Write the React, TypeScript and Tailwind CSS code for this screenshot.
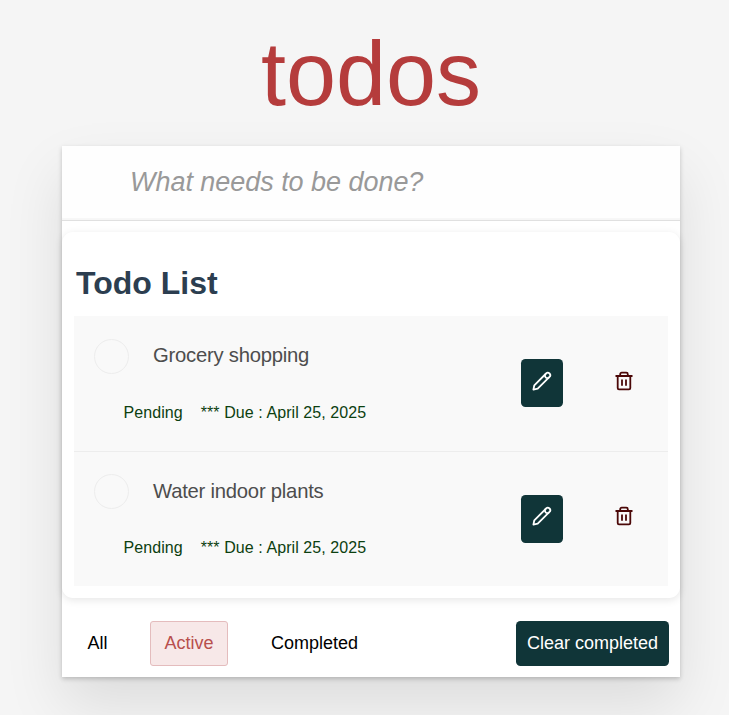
const todos = ["Grocery shopping", "Water indoor plants"];

function PencilIcon() {
  return (
    <svg width="20" height="20" viewBox="0 0 20 20" fill="none" stroke="#fff" strokeWidth="1.8" strokeLinejoin="round" strokeLinecap="round">
      <path d="M1.400 18.600 2.300 14.300 14.100 2.500a2.400 2.400 0 0 1 3.400 3.400L5.700 17.700Z" />
      <path d="M13.200 3.400a2.500 2.500 0 0 0 3.400 3.400" />
    </svg>
  );
}

function TrashIcon() {
  return (
    <svg width="18" height="20" viewBox="0 0 18 20" fill="none" stroke="#4b0808" strokeWidth="1.8">
      <path d="M.500 5h17M5.200 4.800V3.200a1.500 1.500 0 0 1 1.500-1.500h4.600a1.500 1.500 0 0 1 1.500 1.500v1.600M2.700 5v12a1.300 1.300 0 0 0 1.300 1.300h10a1.300 1.300 0 0 0 1.300-1.300V5M7 8.400v6.400M11 8.400v6.400" />
    </svg>
  );
}

function TodoItem({ title }: { title: string }) {
  return (
    <li className="flex h-[135.500px] border-b border-[#ededed] bg-[#f9f9f9] last:h-[134.500px] last:border-b-0">
      <div className="w-[447px]">
        <div className="flex pt-[23px] pl-[19.500px]">
          <span className="-mt-[0.100px] h-[35px] w-[35px] rounded-full border border-[#ededed]" />
          <span className="ml-[24.500px] text-[20.250px] leading-[32px] tracking-[-0.230px] text-[#4d4d4d]">{title}</span>
        </div>
        <p className="mt-[26.700px] ml-[49.500px] text-[16px] leading-[24px] tracking-[0.075px] whitespace-pre text-[#0c4010]">
          Pending<span className="ml-[18px]">*** Due : April 25, 2025</span>
        </p>
      </div>
      <button className="mt-[43px] flex h-[48px] w-[42px] justify-center rounded-[4.500px] bg-[#103538] pt-[11.900px]">
        <PencilIcon />
      </button>
      <button className="mt-[54.900px] ml-[52px] h-[20px] w-[18px]">
        <TrashIcon />
      </button>
    </li>
  );
}

export default function App() {
  return (
    <div className="h-[715px] overflow-hidden bg-[#f5f5f5] pl-[62px] font-['Liberation_Sans',Arial,sans-serif]">
      <h1 className="h-[146px] w-[618px] pt-[23px] text-center text-[90px] leading-[102px] text-[#b53c3c]">todos</h1>
      <main className="h-[531px] w-[618px] bg-white shadow-[0_2px_4.500px_rgba(0,0,0,0.2),0_28px_56px_rgba(0,0,0,0.1)]">
        <input
          className="block h-[74px] w-full bg-[#fefefe] pb-[2px] pl-[68px] text-[27px] tracking-[-0.040px] shadow-[inset_0_-2px_1px_rgba(0,0,0,0.03)] outline-none placeholder:text-[#999] placeholder:italic"
          placeholder="What needs to be done?"
        />
        <section className="border-t border-[#e0e0e0] pt-[11px]">
          <div className="h-[366px] rounded-[11px] bg-white px-[12px] pt-[30px] shadow-[0_2px_9px_rgba(0,0,0,0.1)]">
            <h2 className="mb-[12px] pl-[2px] text-[32px] leading-[42px] font-bold text-[#2c3e50]">Todo List</h2>
            <ul>
              {todos.map((t) => (
                <TodoItem key={t} title={t} />
              ))}
            </ul>
          </div>
        </section>
        <footer className="flex h-[68px] pt-[23px] pl-[12px] text-[18px] leading-[43px]">
          <button className="h-[45px] w-[46px] pl-[1px] text-black">All</button>
          <button className="ml-[30px] h-[45px] w-[78px] rounded-[3px] border border-[#e4bcbd] bg-[#f7e8e8] text-[#b84f4d]">Active</button>
          <button className="ml-[30px] h-[45px] w-[112px] pl-[1px] text-black">Completed</button>
          <button className="ml-[146px] h-[45px] w-[153px] rounded-[4.500px] bg-[#103538] text-white">Clear completed</button>
        </footer>
      </main>
    </div>
  );
}
